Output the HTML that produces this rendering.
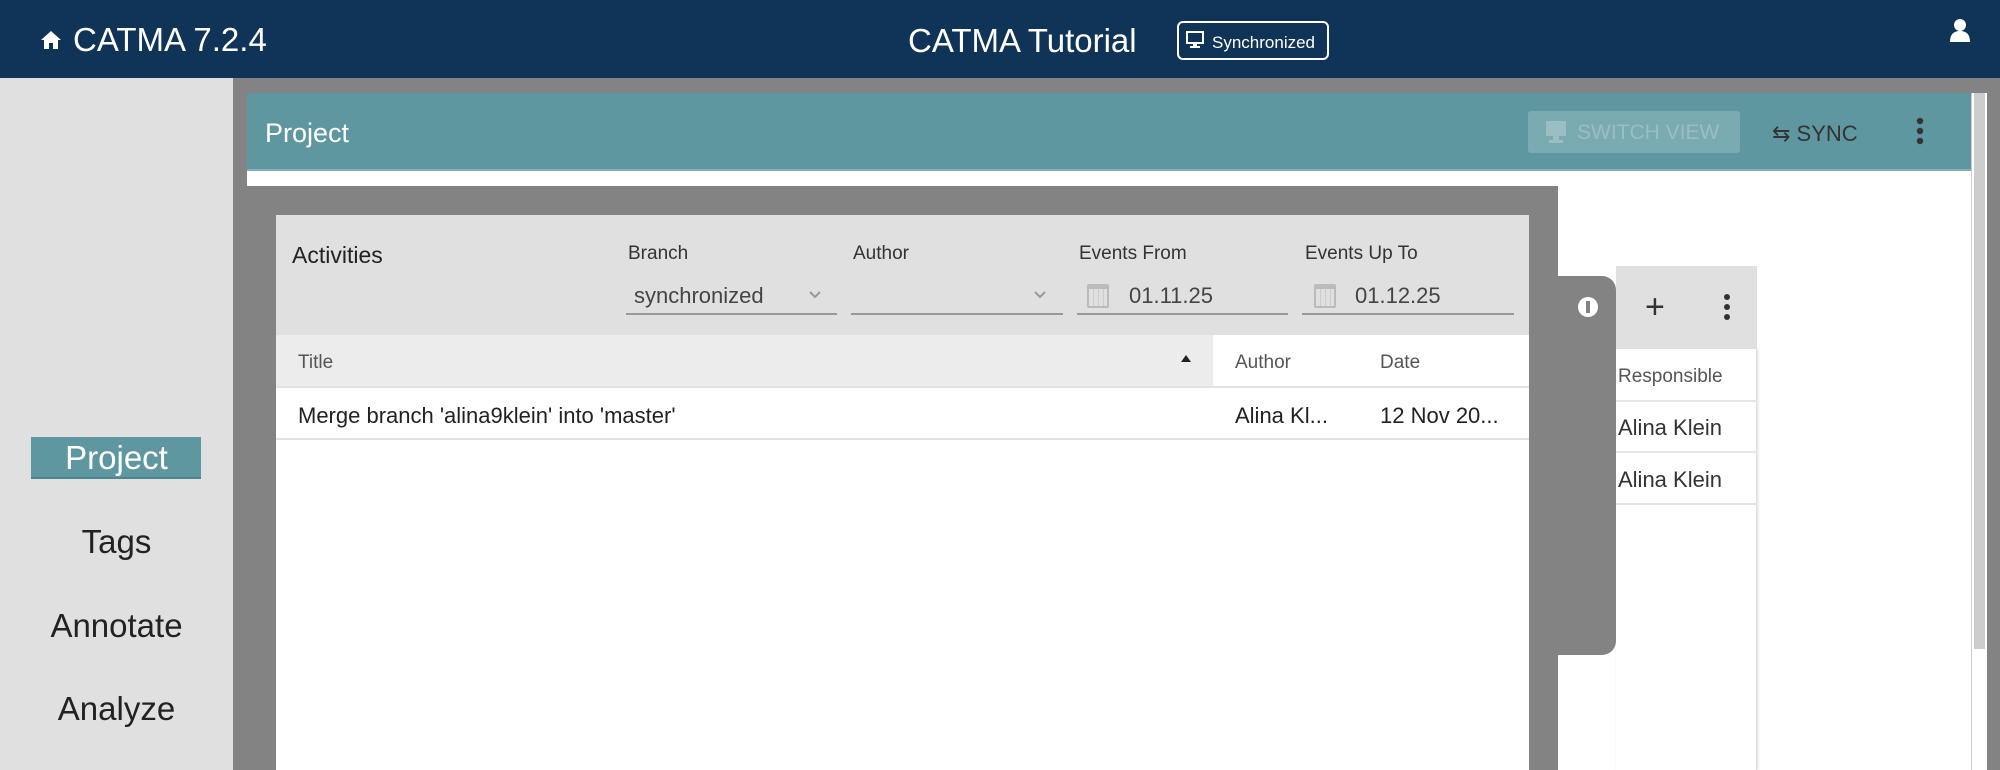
<!DOCTYPE html>
<html><head><meta charset="utf-8"><style>
*{box-sizing:border-box;margin:0;padding:0}
body{width:2000px;height:770px;overflow:hidden;position:relative;background:#838383;font-family:"Liberation Sans",sans-serif;color:#222}
.a{position:absolute}
.hdr{left:0;top:0;width:2000px;height:78px;background:#103457;color:#fff}
.side{left:0;top:78px;width:233px;height:692px;background:#e0e0e0}
.nav{left:0;width:233px;text-align:center;font-size:33px;color:#222}
.lbl{font-size:19px;color:#333;top:243px}
.fld{top:313px;height:2px;background:#999}
.val{top:283px;font-size:22px;color:#444}
.cal{top:284px;width:22px;height:24px;border:2px solid #bbb;border-top-width:5px;border-radius:2px;background:repeating-linear-gradient(90deg,transparent 0 4px,#ccc 4px 5px)}
</style></head><body>
<div class="a hdr">
 <svg class="a" style="left:40px;top:29px" width="22" height="22" viewBox="0 0 22 22"><path d="M11 2 L1 11 h3 v9 h5 v-6 h4 v6 h5 v-9 h3z" fill="#fff"/></svg>
 <div class="a" style="left:73px;top:21px;font-size:33px">CATMA 7.2.4</div>
 <div class="a" style="left:908px;top:22px;font-size:33px">CATMA Tutorial</div>
 <div class="a" style="left:1177px;top:21px;width:152px;height:39px;border:2px solid #fff;border-radius:6px;font-size:17px;padding:10px 0 0 33px">Synchronized</div>
 <svg class="a" style="left:1186px;top:31px" width="18" height="18" viewBox="0 0 18 18"><rect x="1" y="1" width="16" height="11" fill="none" stroke="#fff" stroke-width="2"/><rect x="7" y="12" width="4" height="3" fill="#fff"/><rect x="4" y="15" width="10" height="2" fill="#fff"/></svg>
 <svg class="a" style="left:1949px;top:18px" width="22" height="24" viewBox="0 0 22 24"><circle cx="11" cy="7" r="6" fill="#fff"/><path d="M1 24 Q1 13 11 13 Q21 13 21 24z" fill="#fff"/></svg>
</div>
<div class="a side"></div>
<div class="a" style="left:31px;top:437px;width:170px;height:42px;background:#5f97a0;border-bottom:2px solid #4d8690"></div>
<div class="a nav" style="top:439px;color:#fff">Project</div>
<div class="a nav" style="top:523px">Tags</div>
<div class="a nav" style="top:607px">Annotate</div>
<div class="a nav" style="top:690px">Analyze</div>

<div class="a" style="left:247px;top:93px;width:1724px;height:78px;background:#5f97a0;border-bottom:2px solid #7fb0b8"></div>
<div class="a" style="left:265px;top:118px;font-size:27px;color:#fff">Project</div>
<div class="a" style="left:1528px;top:111px;width:212px;height:42px;background:#7aaab2;border-radius:3px"></div>
<svg class="a" style="left:1545px;top:120px" width="22" height="24" viewBox="0 0 22 24"><rect x="1" y="1" width="20" height="15" fill="#9bbec3"/><rect x="8" y="16" width="6" height="4" fill="#9bbec3"/><rect x="4" y="20" width="14" height="3" fill="#9bbec3"/></svg>
<div class="a" style="left:1577px;top:121px;font-size:21px;color:#9bbec3">SWITCH VIEW</div>
<div class="a" style="left:1772px;top:121px;font-size:22px;color:#333">⇆ SYNC</div>
<svg class="a" style="left:1916px;top:117px" width="8" height="30"><circle cx="4" cy="4" r="3.2" fill="#333"/><circle cx="4" cy="14" r="3.2" fill="#333"/><circle cx="4" cy="24" r="3.2" fill="#333"/></svg>
<div class="a" style="left:247px;top:171px;width:1724px;height:15px;background:#fff"></div>
<div class="a" style="left:1558px;top:186px;width:413px;height:584px;background:#fff"></div>
<div class="a" style="left:1971px;top:93px;width:16px;height:677px;background:#fff;border-left:1px solid #ccc"></div>
<div class="a" style="left:1974px;top:93px;width:11px;height:556px;background:#ccc"></div>

<!-- right panel -->
<div class="a" style="left:1616px;top:266px;width:141px;height:83px;background:#e0e0e0"></div>
<div class="a" style="left:1645px;top:288px;font-size:34px;color:#333">+</div>
<svg class="a" style="left:1723px;top:293px" width="8" height="28"><circle cx="4" cy="4" r="3" fill="#333"/><circle cx="4" cy="14" r="3" fill="#333"/><circle cx="4" cy="24" r="3" fill="#333"/></svg>
<div class="a" style="left:1616px;top:349px;width:141px;height:421px;border-right:1px solid #ddd;box-shadow:1px 0 3px #ddd"></div>
<div class="a" style="left:1618px;top:366px;font-size:19px;color:#555">Responsible</div>
<div class="a" style="left:1616px;top:400px;width:141px;height:2px;background:#e6e6e6"></div>
<div class="a" style="left:1618px;top:415px;font-size:22px;color:#333">Alina Klein</div>
<div class="a" style="left:1616px;top:451px;width:141px;height:2px;background:#e6e6e6"></div>
<div class="a" style="left:1618px;top:467px;font-size:22px;color:#333">Alina Klein</div>
<div class="a" style="left:1616px;top:503px;width:141px;height:2px;background:#e6e6e6"></div>

<!-- tab -->
<div class="a" style="left:1529px;top:276px;width:87px;height:379px;background:#838383;border-radius:0 14px 14px 0"></div>
<div class="a" style="left:1578px;top:297px;width:20px;height:20px;border-radius:50%;background:#fff"></div>
<div class="a" style="left:1586px;top:301px;width:4px;height:12px;background:#838383"></div>

<!-- modal -->
<div class="a" style="left:233px;top:186px;width:1325px;height:584px;background:#838383"></div>
<div class="a" style="left:276px;top:215px;width:1253px;height:120px;background:#e0e0e0"></div>
<div class="a" style="left:292px;top:242px;font-size:23px;color:#222">Activities</div>
<div class="a lbl" style="left:628px">Branch</div>
<div class="a lbl" style="left:853px">Author</div>
<div class="a lbl" style="left:1079px">Events From</div>
<div class="a lbl" style="left:1305px">Events Up To</div>
<div class="a fld" style="left:626px;width:211px"></div>
<div class="a fld" style="left:851px;width:212px"></div>
<div class="a fld" style="left:1077px;width:211px"></div>
<div class="a fld" style="left:1302px;width:212px"></div>
<div class="a val" style="left:634px">synchronized</div>
<svg class="a" style="left:808px;top:290px" width="14" height="10"><path d="M2 2 L7 7 L12 2" fill="none" stroke="#999" stroke-width="2"/></svg>
<svg class="a" style="left:1033px;top:290px" width="14" height="10"><path d="M2 2 L7 7 L12 2" fill="none" stroke="#999" stroke-width="2"/></svg>
<div class="a cal" style="left:1087px"></div>
<div class="a val" style="left:1129px">01.11.25</div>
<div class="a cal" style="left:1314px"></div>
<div class="a val" style="left:1355px">01.12.25</div>

<div class="a" style="left:276px;top:335px;width:1253px;height:435px;background:#fff"></div>
<div class="a" style="left:276px;top:335px;width:937px;height:52px;background:#ececec"></div>
<div class="a" style="left:276px;top:386px;width:1253px;height:2px;background:#e2e2e2"></div>
<div class="a" style="left:298px;top:352px;font-size:19px;color:#555">Title</div>
<svg class="a" style="left:1181px;top:355px" width="10" height="7"><path d="M0 7 L5 0 L10 7z" fill="#222"/></svg>
<div class="a" style="left:1235px;top:352px;font-size:19px;color:#555">Author</div>
<div class="a" style="left:1380px;top:352px;font-size:19px;color:#555">Date</div>
<div class="a" style="left:298px;top:403px;font-size:22px;color:#222">Merge branch 'alina9klein' into 'master'</div>
<div class="a" style="left:1235px;top:403px;font-size:22px;color:#222">Alina Kl...</div>
<div class="a" style="left:1380px;top:403px;font-size:22px;color:#222">12 Nov 20...</div>
<div class="a" style="left:276px;top:438px;width:1253px;height:2px;background:#e2e2e2"></div>
</body></html>
